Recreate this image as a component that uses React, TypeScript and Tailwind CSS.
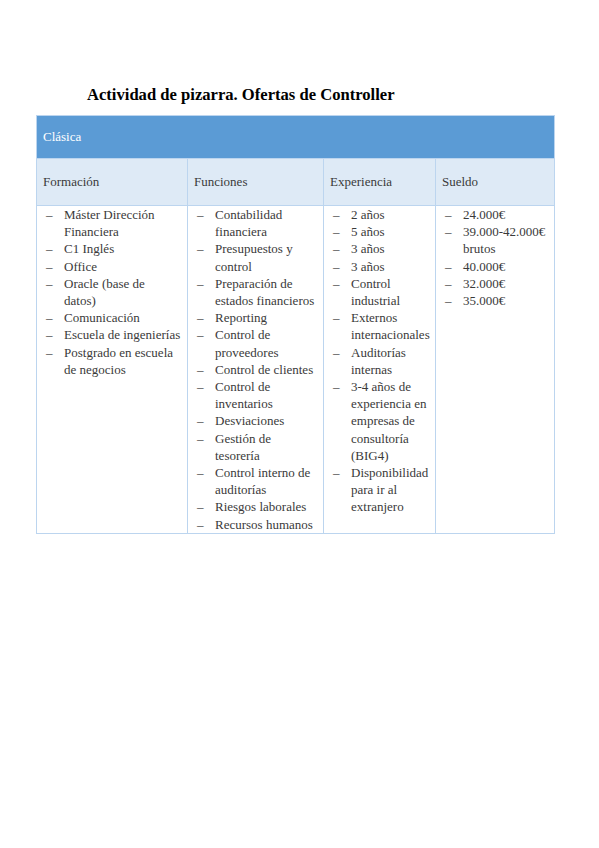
const columns = [
  {
    title: "Formación",
    items: [
      ["Máster Dirección", "Financiera"],
      ["C1 Inglés"],
      ["Office"],
      ["Oracle (base de", "datos)"],
      ["Comunicación"],
      ["Escuela de ingenierías"],
      ["Postgrado en escuela", "de negocios"],
    ],
  },
  {
    title: "Funciones",
    items: [
      ["Contabilidad", "financiera"],
      ["Presupuestos y", "control"],
      ["Preparación de", "estados financieros"],
      ["Reporting"],
      ["Control de", "proveedores"],
      ["Control de clientes"],
      ["Control de", "inventarios"],
      ["Desviaciones"],
      ["Gestión de", "tesorería"],
      ["Control interno de", "auditorías"],
      ["Riesgos laborales"],
      ["Recursos humanos"],
    ],
  },
  {
    title: "Experiencia",
    items: [
      ["2 años"],
      ["5 años"],
      ["3 años"],
      ["3 años"],
      ["Control", "industrial"],
      ["Externos", "internacionales"],
      ["Auditorías", "internas"],
      ["3-4 años de", "experiencia en", "empresas de", "consultoría", "(BIG4)"],
      ["Disponibilidad", "para ir al", "extranjero"],
    ],
  },
  {
    title: "Sueldo",
    items: [
      ["24.000€"],
      ["39.000-42.000€", "brutos"],
      ["40.000€"],
      ["32.000€"],
      ["35.000€"],
    ],
  },
];

const DashList = ({ items }: { items: string[][] }) => (
  <ul className="flex flex-col">
    {items.map((lines, i) => (
      <li key={i} className="flex">
        <span className="w-[27px] shrink-0 pl-[9px]">–</span>
        <span className="whitespace-nowrap">
          {lines.map((line, j) => (
            <span key={j} className="block">
              {line}
            </span>
          ))}
        </span>
      </li>
    ))}
  </ul>
);

export default function App() {
  return (
    <div
      className="min-h-[848px] w-[599px] bg-white text-[#3a3a3a]"
      style={{ fontFamily: '"Liberation Serif", "DejaVu Serif", serif' }}
    >
      <div className="pt-[85px] pl-[87px]">
        <h1 className="text-[16.6px] font-bold leading-[20px] text-black">
          Actividad de pizarra. Ofertas de Controller
        </h1>
      </div>

      <div className="mt-[10px] ml-[36px] w-[519px] border border-[#bcd5ef] text-[13px] leading-[17.2px]">
        <div className="flex h-[42px] items-center bg-[#5b9bd5] px-[6px] text-white">
          Clásica
        </div>
        <div className="grid grid-cols-[150px_136px_112px_119px] border-t border-[#bcd5ef] bg-[#deeaf6]">
          {columns.map((col, i) => (
            <div
              key={col.title}
              className={
                "flex h-[46px] items-center px-[6px] " +
                (i > 0 ? "border-l border-[#bcd5ef]" : "")
              }
            >
              {col.title}
            </div>
          ))}
        </div>
        <div className="grid grid-cols-[150px_136px_112px_119px] border-t border-[#bcd5ef]">
          {columns.map((col, i) => (
            <div
              key={col.title}
              className={i > 0 ? "border-l border-[#bcd5ef]" : ""}
            >
              <DashList items={col.items} />
            </div>
          ))}
        </div>
      </div>
    </div>
  );
}
